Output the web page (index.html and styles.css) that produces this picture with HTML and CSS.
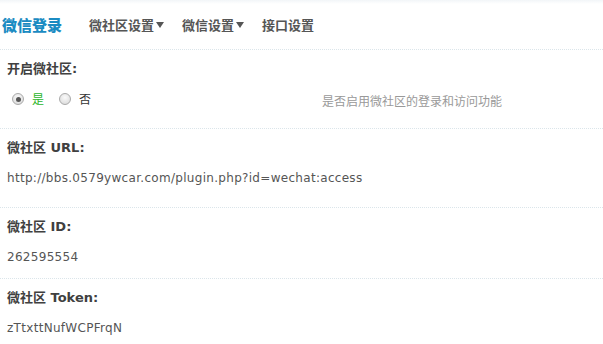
FILE: index.html
```html
<!DOCTYPE html>
<html lang="zh-CN">
<head>
    <meta charset="UTF-8">
    <title>微信登录</title>
    <link rel="stylesheet" href="styles.css">
</head>
<body>
    <div class="header">
        <span class="title">微信登录</span>
        <ul class="nav">
            <li>微社区设置<span class="caret"></span></li>
            <li>微信设置<span class="caret"></span></li>
            <li>接口设置</li>
        </ul>
    </div>

    <div class="section">
        <div class="label">开启微社区:</div>
        <div class="value value-row">
            <div class="radios">
                <label class="radio checked"><input type="radio" name="open" checked>是</label>
                <label class="radio"><input type="radio" name="open">否</label>
            </div>
            <span class="tip">是否启用微社区的登录和访问功能</span>
        </div>
    </div>

    <div class="section">
        <div class="label">微社区 URL:</div>
        <div class="value">http://bbs.0579ywcar.com/plugin.php?id=wechat:access</div>
    </div>

    <div class="section short">
        <div class="label">微社区 ID:</div>
        <div class="value">262595554</div>
    </div>

    <div class="section last">
        <div class="label">微社区 Token:</div>
        <div class="value">zTtxttNufWCPFrqN</div>
    </div>
</body>
</html>
```

FILE: styles.css
```css
* {
    margin: 0;
    padding: 0;
    box-sizing: border-box;
}

body {
    font-family: 'DejaVu Sans', 'Noto Sans CJK SC', sans-serif;
    font-size: 12px;
    color: #555;
    background: linear-gradient(#f2f5f8 0, #fff 4px) no-repeat, #fff;
}

.header {
    height: 50px;
    display: flex;
    align-items: center;
    padding-left: 2px;
    border-bottom: 1px dotted #dbe5ea;
}

.title {
    font-family: 'Noto Sans CJK SC', sans-serif;
    font-size: 15px;
    font-weight: 900;
    color: #1b8bc2;
    margin-right: 27px;
}

.nav {
    list-style: none;
    display: flex;
    gap: 18px;
}

.nav li {
    font-family: 'Noto Sans CJK SC', sans-serif;
    font-size: 13px;
    font-weight: bold;
    color: #555;
    display: flex;
    align-items: center;
}

.caret {
    width: 0;
    height: 0;
    border-top: 6px solid #555;
    border-left: 4px solid transparent;
    border-right: 4px solid transparent;
    margin-left: 2px;
}

.section {
    padding: 8px 7px 10px;
    border-bottom: 1px dotted #dbe5ea;
}

.section.short {
    padding-bottom: 2px;
}

.section.last {
    border-bottom: none;
}

.label {
    line-height: 22px;
    font-size: 13px;
    font-weight: bold;
    color: #404040;
}

.value {
    line-height: 38px;
    font-size: 12px;
    letter-spacing: 0.3px;
    color: #555;
}

.value-row {
    height: 38px;
    display: flex;
    align-items: center;
    letter-spacing: 0;
}

.radios {
    width: 315px;
    display: flex;
    gap: 15px;
    padding-left: 5px;
}

.radio {
    display: flex;
    align-items: center;
    gap: 8px;
    font-family: 'Noto Sans CJK SC', sans-serif;
    color: #333;
}

.radio.checked {
    color: #2bb52b;
}

.radio input {
    appearance: none;
    width: 12px;
    height: 12px;
    border: 1px solid #aaa;
    border-radius: 50%;
    background: radial-gradient(circle at 50% 35%, #fafafa, #d6d6d6);
    display: flex;
    align-items: center;
    justify-content: center;
}

.radio input:checked::after {
    content: '';
    width: 5px;
    height: 5px;
    border-radius: 50%;
    background: #555;
}

.tip {
    font-family: 'Noto Sans CJK SC', sans-serif;
    line-height: 30px;
    margin-top: 4px;
    color: #999;
}
```
